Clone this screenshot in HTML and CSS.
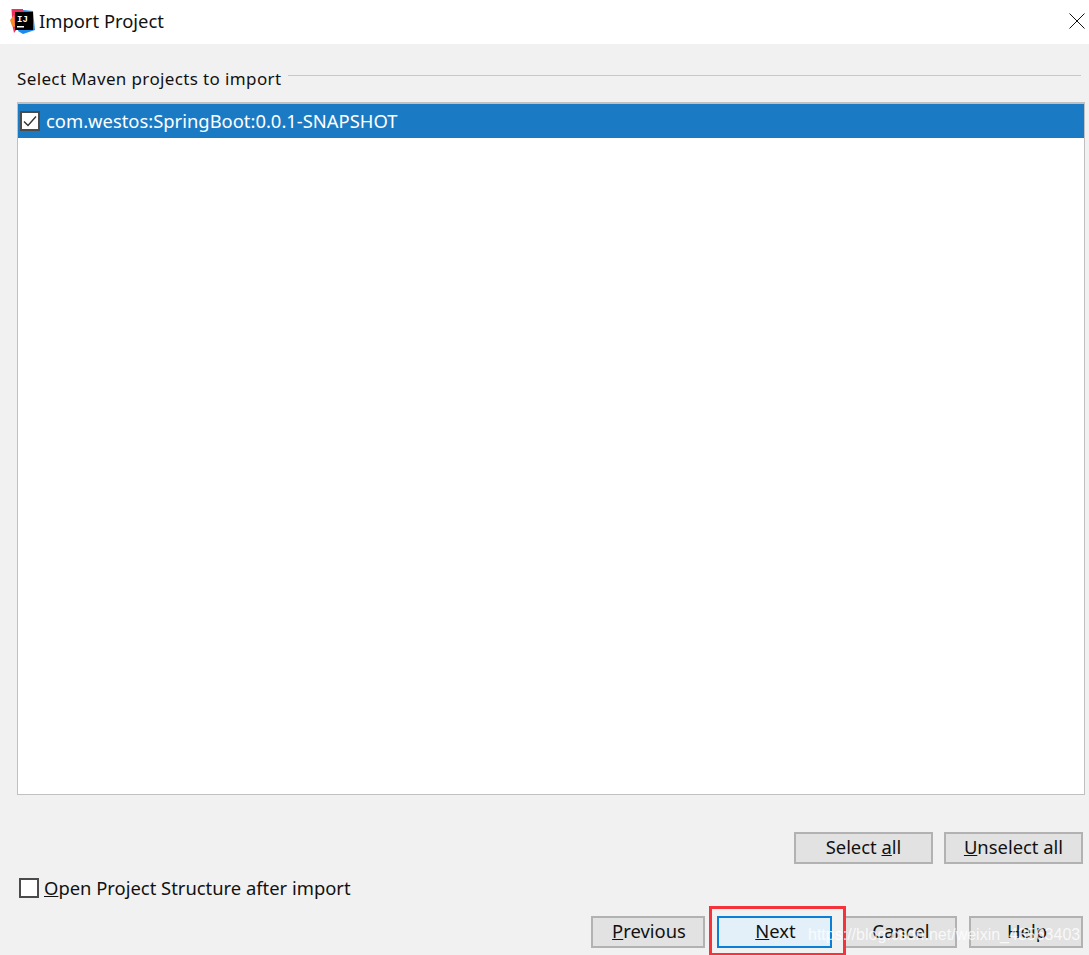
FILE: index.html
```html
<!DOCTYPE html>
<html lang="en">
<head>
<meta charset="utf-8">
<title>Import Project</title>
<link rel="stylesheet" href="styles.css">
</head>
<body>
<div class="dialog">
  <header class="titlebar">
    <svg class="logo" width="25" height="25" viewBox="0 0 25 25">
      <path d="M1.5 0 L13 0 L13 12 L4 24 L2.5 17 Z" fill="#f0315f"/>
      <path d="M0 11 L4 6 L5 18 L2 17 Z" fill="#f98b24"/>
      <path d="M13 1 L23 2 L25 21 L13 25 L8 22 Z" fill="#1c8bf0"/>
      <rect x="5" y="3" width="18" height="18" fill="#000"/>
      <text x="7" y="12.5" class="logo-text">IJ</text>
      <rect x="7" y="17" width="7" height="1.5" fill="#fff"/>
    </svg>
    <span class="title">Import Project</span>
    <svg class="close" width="16" height="16" viewBox="0 0 16 16">
      <path d="M0.5 0.5 L15.5 15.5 M15.5 0.5 L0.5 15.5" stroke="#111" stroke-width="1" fill="none"/>
    </svg>
  </header>
  <main class="content">
    <div class="group-head">
      <span class="group-label">Select Maven projects to import</span>
      <span class="group-line"></span>
    </div>
    <div class="list">
      <div class="row">
        <span class="check check-on">
          <svg width="16" height="16" viewBox="0 0 16 16"><path d="M2 8.5 L6 12.5 L14 3.5" stroke="#333" stroke-width="1.4" fill="none"/></svg>
        </span>
        <span class="row-text">com.westos:SpringBoot:0.0.1-SNAPSHOT</span>
      </div>
    </div>
    <div class="select-actions">
      <button class="btn">Select <u>a</u>ll</button>
      <button class="btn"><u>U</u>nselect all</button>
    </div>
    <label class="open-option">
      <span class="check"></span>
      <span class="option-text"><u>O</u>pen Project Structure after import</span>
    </label>
    <div class="wizard-actions">
      <button class="btn btn-small"><u>P</u>revious</button>
      <button class="btn btn-small btn-default"><u>N</u>ext</button>
      <button class="btn btn-small">Cancel</button>
      <button class="btn btn-small">Help</button>
    </div>
  </main>
  <div class="highlight"></div>
  <div class="watermark">https://blog.csdn.net/weixin_43563403</div>
</div>
</body>
</html>
```
FILE: styles.css
```css
* { box-sizing: border-box; }
html, body { margin: 0; padding: 0; }
body {
  font-family: "Noto Sans", "Open Sans", sans-serif;
  font-size: 18.4px;
  color: #111;
}
.dialog {
  position: relative;
  width: 1089px;
  height: 955px;
  overflow: hidden;
  background: #f1f1f1;
  display: flex;
  flex-direction: column;
}
.titlebar {
  height: 44px;
  flex: none;
  background: #fff;
  display: flex;
  align-items: center;
  padding: 0 4px 2px 10px;
}
.logo { flex: none; }
.logo-text {
  font-family: "Liberation Mono", monospace;
  font-weight: 700;
  font-size: 9px;
  fill: #fff;
}
.title { margin-left: 4px; line-height: 24px; }
.close { margin-left: auto; }
.content {
  flex: 1;
  display: flex;
  flex-direction: column;
  padding: 0 5px 0 17px;
}
.group-head {
  height: 58px;
  flex: none;
  display: flex;
  align-items: center;
  padding-top: 12px;
  gap: 7px;
  padding-right: 3px;
}
.group-label { font-size: 17px; line-height: 22px; letter-spacing: 0.37px; white-space: nowrap; }
.group-line { flex: 1; height: 1px; background: #c8c8c8; margin-top: -7px; }
.list {
  height: 693px;
  flex: none;
  background: #fff;
  border: 1px solid #c0c0c0;
  border-top-width: 2px;
  margin-right: -1px;
}
.row {
  height: 34px;
  background: #1a7bc4;
  color: #fff;
  display: flex;
  align-items: center;
  padding-left: 2px;
  gap: 6px;
  white-space: nowrap;
}
.row-text, .option-text { padding-bottom: 2px; }
.check {
  width: 20px;
  height: 20px;
  flex: none;
  display: flex;
  align-items: center;
  justify-content: center;
  background: #fff;
  border: 2px solid #4b4b4b;
}
.select-actions {
  display: flex;
  justify-content: flex-end;
  gap: 11px;
  margin-top: 37px;
  margin-right: 1px;
}
.btn {
  font: inherit;
  color: inherit;
  width: 139px;
  height: 32px;
  padding: 0 0 2px;
  background: #e2e2e2;
  border: 2px solid #b2b2b2;
  line-height: 24px;
  white-space: nowrap;
}
.open-option {
  display: flex;
  align-items: center;
  gap: 5px;
  padding-left: 2px;
  height: 24px;
  margin-top: 12px;
}
.wizard-actions {
  display: flex;
  justify-content: flex-end;
  gap: 12px;
  margin-top: 16px;
  margin-right: 1px;
}
.btn-small { width: 114px; padding-left: 2px; }
.btn-default { width: 115px; margin-right: -1px; background: #e3f0fa; border-color: #0a7fd6; }
.highlight {
  position: absolute;
  left: 709px;
  top: 906px;
  width: 137px;
  height: 49px;
  border: 3px solid #f4333a;
  border-bottom-width: 2px;
}
.watermark {
  position: absolute;
  left: 808px;
  top: 925px;
  font-family: "Liberation Sans", sans-serif;
  font-size: 16px;
  line-height: 20px;
  color: rgba(255, 255, 255, 0.78);
  white-space: nowrap;
}
```
